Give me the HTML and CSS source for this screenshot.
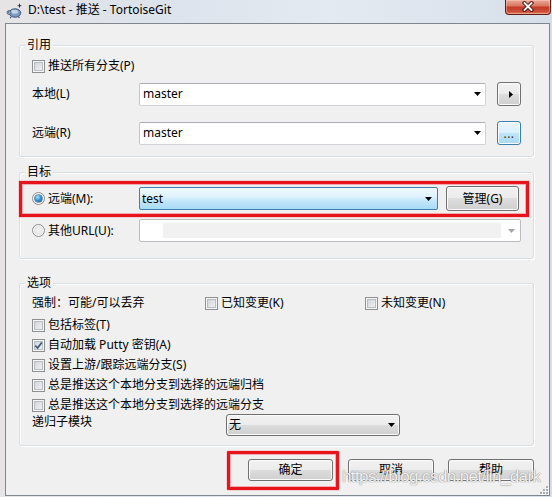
FILE: index.html
```html
<!DOCTYPE html>
<html lang="zh-CN">
<head>
<meta charset="utf-8">
<title>D:\test - 推送 - TortoiseGit</title>
<link rel="stylesheet" href="styles.css">
</head>
<body>
<div class="window">
  <header class="titlebar">
    <svg class="app-icon" viewBox="0 0 16 16" width="16" height="16">
      <ellipse cx="9" cy="10" rx="5.8" ry="4.2" fill="#7d9bbd" stroke="#3e5a7a" stroke-width="1"/>
      <ellipse cx="8.5" cy="8.8" rx="3.6" ry="2" fill="#c3d3e4"/>
      <circle cx="3" cy="9.5" r="2" fill="#9fb4cb" stroke="#3e5a7a" stroke-width="0.8"/>
      <circle cx="2.6" cy="9" r="0.6" fill="#1d2b3a"/>
      <path d="M5 13.8 L4.2 15.2 M12.5 13.6 L13.4 15" stroke="#3e5a7a" stroke-width="1.2"/>
      <path d="M13.5 0.8 L13.5 4.6 M11.6 2.7 L15.4 2.7" stroke="#222" stroke-width="0.9"/>
    </svg>
    <span class="title">D:\test - 推送 - TortoiseGit</span>
    <div class="close-btn">
      <svg viewBox="0 0 12 11" width="12" height="11">
        <path d="M2.5 2 L9.5 9 M9.5 2 L2.5 9" stroke="#4a140c" stroke-width="3.8" stroke-linecap="square"/>
        <path d="M2.5 2 L9.5 9 M9.5 2 L2.5 9" stroke="#ffffff" stroke-width="1.9" stroke-linecap="square"/>
      </svg>
    </div>
  </header>
  <div class="frame">
    <main class="client">
      <section class="group group-ref">
        <div class="group-title">引用</div>
        <div class="check-row row-all"><span class="cb"></span><span>推送所有分支(P)</span></div>
        <div class="field-row row-local">
          <span class="field-label">本地(L)</span>
          <div class="combo combo-main"><span class="combo-text">master</span><svg class="arrow" viewBox="0 0 7 4" width="7" height="4"><polygon points="0,0 7,0 3.5,4" fill="#000"/></svg></div>
          <div class="btn btn-sq"><svg class="tri-right" viewBox="0 0 4 7" width="4" height="7"><polygon points="0,0 4,3.5 0,7" fill="#000"/></svg></div>
        </div>
        <div class="field-row row-remote">
          <span class="field-label">远端(R)</span>
          <div class="combo combo-main"><span class="combo-text">master</span><svg class="arrow" viewBox="0 0 7 4" width="7" height="4"><polygon points="0,0 7,0 3.5,4" fill="#000"/></svg></div>
          <div class="btn btn-sq btn-hot"><span class="dots">...</span></div>
        </div>
      </section>

      <section class="group group-target">
        <div class="group-title">目标</div>
        <div class="field-row row-m marked">
          <span class="field-label"><span class="radio on"></span><span>远端(M):</span></span>
          <div class="combo combo-test"><span class="combo-text">test</span><svg class="arrow" viewBox="0 0 7 4" width="7" height="4"><polygon points="0,0 7,0 3.5,4" fill="#000"/></svg></div>
          <div class="btn btn-manage">管理(G)</div>
        </div>
        <div class="field-row row-u">
          <span class="field-label"><span class="radio"></span><span>其他URL(U):</span></span>
          <div class="combo combo-url"><span class="dis-field"></span><svg class="arrow arrow-dis" viewBox="0 0 7 4" width="7" height="4"><polygon points="0,0 7,0 3.5,4" fill="#a3a3a3"/></svg></div>
        </div>
      </section>

      <section class="group group-opts">
        <div class="group-title">选项</div>
        <div class="opt-first">
          <span class="cell-force">强制：可能/可以丢弃</span>
          <span class="check-row cell-known"><span class="cb"></span><span>已知变更(K)</span></span>
          <span class="check-row"><span class="cb"></span><span>未知变更(N)</span></span>
        </div>
        <div class="check-row opt opt-tags"><span class="cb"></span><span>包括标签(T)</span></div>
        <div class="check-row opt"><span class="cb checked"><svg viewBox="0 0 11 11" width="11" height="11"><path d="M2.3 5.6 L4.6 8 L8.8 2.6" fill="none" stroke="#3b5583" stroke-width="1.7"/></svg></span><span>自动加载 Putty 密钥(A)</span></div>
        <div class="check-row opt"><span class="cb"></span><span>设置上游/跟踪远端分支(S)</span></div>
        <div class="check-row opt"><span class="cb"></span><span>总是推送这个本地分支到选择的远端归档</span></div>
        <div class="check-row opt"><span class="cb"></span><span>总是推送这个本地分支到选择的远端分支</span></div>
        <div class="row-sub">
          <span class="sub-label">递归子模块</span>
          <div class="combo-list"><span class="combo-text">无</span><svg class="arrow" viewBox="0 0 7 4" width="7" height="4"><polygon points="0,0 7,0 3.5,4" fill="#000"/></svg></div>
        </div>
      </section>

      <div class="buttons">
        <div class="btn btn-ok">确定</div>
        <div class="btn btn-cancel">取消</div>
        <div class="btn btn-help">帮助</div>
      </div>

      <div class="watermark">https://blog.csdn.net/lin_dark</div>
      <svg class="grip" viewBox="0 0 10 10" width="10" height="10">
        <g fill="#ffffff">
          <rect x="8" y="8" width="2" height="2"/><rect x="5" y="8" width="2" height="2"/><rect x="2" y="8" width="2" height="2"/>
          <rect x="8" y="5" width="2" height="2"/><rect x="5" y="5" width="2" height="2"/><rect x="8" y="2" width="2" height="2"/>
        </g>
        <g fill="#a9acb0">
          <rect x="7" y="7" width="2" height="2"/><rect x="4" y="7" width="2" height="2"/><rect x="1" y="7" width="2" height="2"/>
          <rect x="7" y="4" width="2" height="2"/><rect x="4" y="4" width="2" height="2"/><rect x="7" y="1" width="2" height="2"/>
        </g>
      </svg>
    </main>
  </div>
</div>
</body>
</html>
```

FILE: styles.css
```css
* { box-sizing: border-box; }
html, body { margin: 0; padding: 0; }
body {
  width: 552px;
  height: 497px;
  overflow: hidden;
  background: #dfe6ee;
  font-family: "Noto Sans", "Noto Sans CJK SC", sans-serif;
  font-size: 12px;
  color: #000;
}
.window {
  width: 552px;
  height: 497px;
  display: flex;
  flex-direction: column;
  background: linear-gradient(to right, #e7e4e5 0, #dbe3ec 30%, #e4eaf2 60%, #d6dfe9 100%);
}
.titlebar {
  height: 23px;
  flex: none;
  display: flex;
  align-items: flex-start;
  padding-left: 6px;
}
.app-icon { flex: none; margin-top: 3px; }
.title {
  margin-left: 6px;
  margin-top: 2px;
  line-height: 16px;
  white-space: nowrap;
}
.close-btn {
  margin-left: auto;
  margin-right: 1px;
  width: 46px;
  height: 15px;
  flex: none;
  border: 1px solid #5e1e14;
  border-top: none;
  border-radius: 0 0 4px 4px;
  background: linear-gradient(#eca898 0%, #dc7a64 40%, #c23c27 52%, #cb4a33 80%, #e07a5e 100%);
  box-shadow: inset 0 0 0 1px rgba(255, 210, 200, 0.45);
  display: flex;
  justify-content: center;
  align-items: flex-start;
  padding-top: 1px;
}
.frame {
  flex: 1;
  display: flex;
  padding: 0 2px 1px 5px;
}
.client {
  position: relative;
  flex: 1;
  border: 1px solid #7f868e;
  background: #f0f0f0;
  display: flex;
  flex-direction: column;
  padding-top: 21px;
}

/* group boxes */
.group {
  margin: 0 15px 0 13px;
  border: 1px solid #d5dfe5;
  border-radius: 3px;
  box-shadow: inset 1px 1px 0 #ffffff, 1px 1px 0 #ffffff;
  padding: 0 12px;
  display: flex;
  flex-direction: column;
}
.group-title {
  align-self: flex-start;
  margin: -8px 0 0 -7px;
  padding: 0 2px;
  line-height: 14px;
  background: #f0f0f0;
}
.group-ref { padding-bottom: 11px; }
.group-target { margin-top: 15px; padding-bottom: 16px; }
.group-opts { margin-top: 24px; padding-bottom: 9px; }

/* rows */
.check-row {
  display: flex;
  align-items: center;
  gap: 3px;
  height: 16px;
  line-height: 16px;
  white-space: nowrap;
}
.row-all { margin-top: 6px; }
.field-row { display: flex; align-items: center; }
.field-label {
  width: 107px;
  flex: none;
  display: flex;
  align-items: center;
  gap: 3px;
  line-height: 16px;
  white-space: nowrap;
}
.row-local { margin-top: 8px; height: 24px; }
.row-remote { margin-top: 15px; height: 24px; }
.row-m { margin-top: 7px; height: 25px; }
.row-u { margin-top: 8px; height: 23px; }

/* check box / radio */
.cb {
  width: 13px;
  height: 13px;
  flex: none;
  border: 1px solid #8e8f8f;
  background: linear-gradient(135deg, #cbcfd5 0%, #f6f6f6 100%);
  box-shadow: inset 0 0 0 1px #f6f6f6, inset 0 0 0 2px #b7bcc2;
  display: flex;
  align-items: center;
  justify-content: center;
}
.cb svg { flex: none; }
.radio {
  width: 13px;
  height: 13px;
  flex: none;
  border-radius: 50%;
  border: 1px solid #8e8f8f;
  background: radial-gradient(circle at 50% 50%, #f4f4f4 0, #e4e4e4 55%, #cdcdcd 100%);
  box-shadow: inset 0 0 0 1px #ffffff;
  display: flex;
  align-items: center;
  justify-content: center;
}
.radio.on::before {
  content: "";
  width: 7px;
  height: 7px;
  border-radius: 50%;
  background: radial-gradient(circle at 38% 32%, #b4e8ff 0, #3596dc 45%, #0d4a8a 100%);
  box-shadow: 0 0 0 0.6px #1f4f7b;
}

/* combo boxes */
.combo {
  height: 23px;
  flex: none;
  display: flex;
  align-items: center;
  background: #ffffff;
  border: 1px solid #cfd3d8;
  border-top-color: #abadb3;
  border-left-color: #c2c6cc;
  border-radius: 2px;
  padding-left: 3px;
  line-height: 16px;
}
.combo .arrow { margin-left: auto; margin-right: 4px; flex: none; }
.combo-main { width: 347px; }
.combo-test {
  width: 299px;
  padding-left: 2px;
  border: 1px solid #3c7fb1;
  background: linear-gradient(#f0f9fe 0%, #dff2fc 40%, #c3e7fb 60%, #a9daf6 100%);
}
.combo-test .arrow { margin-right: 5px; }
.combo-url {
  width: 382px;
  padding-left: 0;
  border: 1px solid #b9bdc1;
}
.dis-field {
  margin-left: 23px;
  width: 338px;
  height: 15px;
  background: #f1f1f1;
}
.combo-url .arrow { margin-right: 5px; }

/* buttons */
.btn {
  flex: none;
  display: flex;
  align-items: center;
  justify-content: center;
  border: 1px solid #707070;
  border-radius: 3px;
  background: linear-gradient(#f2f2f2 0%, #ebebeb 49%, #dddddd 50%, #cfcfcf 100%);
  box-shadow: inset 0 0 0 1px #fbfbfb;
  line-height: 16px;
  white-space: nowrap;
}
.btn-sq { width: 24px; height: 24px; margin-left: 11px; }
.tri-right { margin-left: 3px; }
.btn-hot {
  border-color: #3c7fb1;
  background: linear-gradient(#eaf6fd 0%, #d9f0fc 49%, #bee6fd 50%, #a7d9f5 100%);
}
.dots { color: #3d2a10; margin-top: 2px; letter-spacing: 0.5px; }
.btn-manage { width: 73px; height: 25px; margin-left: 8px; }

/* options */
.opt-first {
  margin-top: 5px;
  height: 16px;
  display: flex;
  align-items: center;
  line-height: 16px;
  white-space: nowrap;
}
.cell-force { width: 173px; flex: none; }
.cell-known { width: 160px; flex: none; }
.opt { margin-top: 4px; }
.opt-tags { margin-top: 6px; }
.row-sub {
  margin-top: 1px;
  height: 22px;
  display: flex;
  align-items: flex-start;
}
.sub-label { width: 194px; flex: none; line-height: 16px; }
.combo-list {
  width: 174px;
  height: 22px;
  display: flex;
  align-items: center;
  padding-left: 2px;
  border: 1px solid #707070;
  border-radius: 3px;
  background: linear-gradient(#f2f2f2 0%, #ebebeb 49%, #dddddd 50%, #cfcfcf 100%);
  box-shadow: inset 0 0 0 1px #fbfbfb;
  line-height: 16px;
}
.combo-list .arrow { margin-left: auto; margin-right: 4px; }

/* dialog buttons */
.buttons {
  display: flex;
  justify-content: flex-end;
  padding-right: 15px;
  margin-top: 13px;
}
.buttons .btn { height: 22px; }
.btn-ok { width: 85px; position: relative; }
.btn-cancel { width: 86px; margin-left: 15px; }
.btn-help { width: 86px; margin-left: 14px; }

/* red annotation frames */
.marked { position: relative; }
.marked::after,
.btn-ok::after {
  content: "";
  position: absolute;
  border: 3px solid #e8141c;
  box-shadow: inset 0 0 0 1px rgba(240, 90, 100, 0.45), 0 0 0 0.5px rgba(240, 90, 100, 0.4);
  pointer-events: none;
}
.marked::after { left: -13px; right: -8px; top: -5px; bottom: -6px; }
.btn-ok::after { left: -22px; right: -7px; top: -9px; bottom: -10px; border-radius: 1px; }

/* overlays */
.watermark {
  position: absolute;
  left: 336px;
  top: 444px;
  font-family: "Liberation Sans", sans-serif;
  font-size: 17px;
  line-height: 17px;
  letter-spacing: -0.6px;
  color: rgba(255, 255, 255, 0.88);
  text-shadow: 0 0 1px #8a8a8a, 0 0 1px #8a8a8a;
  white-space: nowrap;
  pointer-events: none;
}
.grip { position: absolute; right: 0; bottom: 0; }
```
